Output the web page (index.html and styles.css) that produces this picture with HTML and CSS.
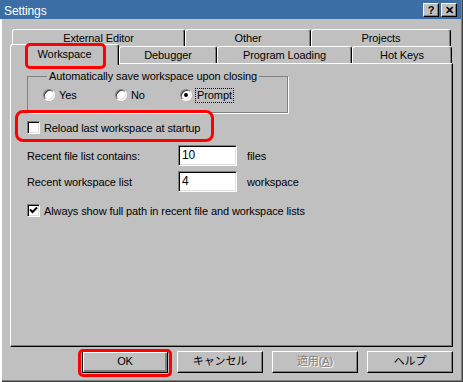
FILE: index.html
```html
<!DOCTYPE html>
<html lang="en">
<head>
    <meta charset="UTF-8">
    <title>Settings</title>
    <link rel="stylesheet" href="styles.css">
</head>
<body>
    <div class="window">
        <!-- Title bar -->
        <div class="titlebar">
            <span class="title">Settings</span>
            <div class="caption-buttons">
                <span class="cap-btn">?</span>
                <span class="cap-btn">&#x2715;</span>
            </div>
        </div>

        <!-- Tabs -->
        <div class="tabs">
            <div class="tab-row back">
                <div class="tab t-ext">External Editor</div>
                <div class="tab t-other">Other</div>
                <div class="tab t-proj">Projects</div>
            </div>
            <div class="tab-row front">
                <div class="tab t-ws selected">Workspace</div>
                <div class="tab t-dbg">Debugger</div>
                <div class="tab t-prog">Program Loading</div>
                <div class="tab t-hot">Hot Keys</div>
            </div>
        </div>

        <!-- Workspace page -->
        <div class="panel">
            <fieldset class="group">
                <legend>Automatically save workspace upon closing</legend>
                <div class="radio-row">
                    <span class="radio r-yes"><span class="radio-dot"></span>Yes</span>
                    <span class="radio r-no"><span class="radio-dot"></span>No</span>
                    <span class="radio"><span class="radio-dot on"></span><span class="focus">Prompt</span></span>
                </div>
            </fieldset>

            <div class="check-row reload">
                <span class="check-box"></span>Reload last workspace at startup
            </div>

            <div class="field-row first">
                <span class="field-label">Recent file list contains:</span>
                <span class="input">10</span>
                <span class="unit">files</span>
            </div>
            <div class="field-row">
                <span class="field-label">Recent workspace list</span>
                <span class="input">4</span>
                <span class="unit">workspace</span>
            </div>

            <div class="check-row full-path">
                <span class="check-box">
                    <svg width="9" height="9" viewBox="0 0 9 9"><path d="M1 3.5 L3.5 6 L8 1.5" fill="none" stroke="#000" stroke-width="2"/></svg>
                </span>Always show full path in recent file and workspace lists
            </div>
        </div>

        <!-- Dialog buttons -->
        <div class="buttons">
            <span class="btn default">OK</span>
            <span class="btn">キャンセル</span>
            <span class="btn disabled">適用(<u>A</u>)</span>
            <span class="btn">ヘルプ</span>
        </div>

        <!-- red annotation marks -->
        <div class="mark mark-tab"></div>
        <div class="mark mark-reload"></div>
        <div class="mark mark-ok"></div>
    </div>
</body>
</html>
```

FILE: styles.css
```css
body {
    margin: 0;
    background-color: #c0c0c0;
    font-family: "Liberation Sans", "Noto Sans CJK JP", sans-serif;
    font-size: 11px;
    letter-spacing: -0.1px;
    color: #000;
}

.window {
    position: relative;
    width: 463px;
    height: 382px;
    box-sizing: border-box;
    overflow: hidden;
    box-shadow: inset 2px 0 0 #fff, inset -1px -1px 0 #404040, inset -2px -2px 0 #808080;
}

/* Title bar */
.titlebar {
    display: flex;
    align-items: center;
    justify-content: space-between;
    height: 19px;
    margin-right: 2px;
    background-color: #3a6ea5;
    color: #fff;
}

.title {
    padding: 2px 0 0 4px;
    font-size: 12px;
}

.caption-buttons {
    display: flex;
    gap: 2px;
    padding-right: 4px;
}

.cap-btn {
    width: 16px;
    height: 14px;
    box-sizing: border-box;
    background-color: #c0c0c0;
    color: #000;
    font-weight: bold;
    font-size: 11px;
    line-height: 12px;
    text-align: center;
    border-top: 1px solid #fff;
    border-left: 1px solid #fff;
    border-right: 1px solid #000;
    border-bottom: 1px solid #000;
    box-shadow: inset -1px -1px 0 #808080;
}

/* Tabs */
.tabs {
    padding-top: 10px;
}

.tab-row {
    display: flex;
    height: 17px;
}

.tab-row.back {
    margin-left: 12px;
}

.tab-row.front {
    margin-left: 10px;
}

.tab {
    box-sizing: border-box;
    height: 17px;
    border-top: 1px solid #fff;
    border-left: 1px solid #fff;
    border-right: 1px solid #000;
    border-radius: 3px 3px 0 0;
    box-shadow: inset -1px 0 0 #808080;
    text-align: center;
    line-height: 17px;
    background-color: #c0c0c0;
}

.t-ext { width: 173px; }
.t-other { width: 126px; }
.t-proj { width: 140px; }
.t-ws { width: 109px; }
.t-dbg { width: 98px; }
.t-prog { width: 135px; }
.t-hot { width: 100px; }

.tab.selected {
    position: relative;
    z-index: 2;
    height: 21px;
    margin-top: -2px;
    line-height: 19px;
}

/* Page */
.panel {
    box-sizing: border-box;
    width: 443px;
    height: 284px;
    margin-left: 10px;
    padding: 6px 0 0 16px;
    border-top: 1px solid #fff;
    border-left: 1px solid #fff;
    border-right: 1px solid #000;
    border-bottom: 1px solid #000;
    box-shadow: inset -1px -1px 0 #808080;
}

.group {
    box-sizing: border-box;
    width: 261px;
    height: 43px;
    margin: 0;
    padding: 5px 0 0 15px;
    border: 1px solid #808080;
    box-shadow: 1px 1px 0 #fff;
}

.group legend {
    padding: 0 2px;
    margin-left: 4px;
    line-height: 13px;
}

.radio-row {
    display: flex;
    height: 14px;
    line-height: 14px;
}

.radio {
    display: flex;
    align-items: center;
    gap: 4px;
}

.r-yes { width: 72px; }
.r-no { width: 65px; }

.radio-dot {
    position: relative;
    width: 12px;
    height: 12px;
    box-sizing: border-box;
    border-radius: 50%;
    background-color: #fff;
    border-top: 1px solid #808080;
    border-left: 1px solid #808080;
    border-right: 1px solid #fff;
    border-bottom: 1px solid #fff;
    box-shadow: inset 1px 1px 0 #404040, inset -1px -1px 0 #dfdfdf;
}

.radio-dot.on::after {
    content: "";
    position: absolute;
    left: 3px;
    top: 3px;
    width: 4px;
    height: 4px;
    border-radius: 50%;
    background-color: #000;
}

.focus {
    outline: 1px dotted #000;
    padding: 0 1px;
    line-height: 13px;
}

.check-row {
    display: flex;
    align-items: center;
    gap: 4px;
    height: 13px;
}

.check-row.reload {
    margin-top: 8px;
}

.check-row.full-path {
    margin-top: 12px;
}

.check-box {
    display: flex;
    align-items: center;
    justify-content: center;
    width: 13px;
    height: 13px;
    box-sizing: border-box;
    background-color: #fff;
    border-top: 1px solid #808080;
    border-left: 1px solid #808080;
    border-right: 1px solid #fff;
    border-bottom: 1px solid #fff;
    box-shadow: inset 1px 1px 0 #000, inset -1px -1px 0 #dfdfdf;
}

.field-row {
    display: flex;
    align-items: center;
    height: 21px;
    margin-top: 5px;
}

.field-row.first {
    margin-top: 11px;
}

.field-label {
    width: 151px;
}

.input {
    box-sizing: border-box;
    width: 59px;
    height: 21px;
    padding: 2px 0 0 3px;
    background-color: #fff;
    border-top: 1px solid #808080;
    border-left: 1px solid #808080;
    border-right: 1px solid #fff;
    border-bottom: 1px solid #fff;
    box-shadow: inset 1px 1px 0 #000, inset -1px -1px 0 #dfdfdf;
    font-size: 12px;
    line-height: 15px;
}

.unit {
    margin-left: 10px;
}

/* Buttons */
.buttons {
    display: flex;
    gap: 9px;
    margin: 4px 0 0 82px;
}

.btn {
    box-sizing: border-box;
    width: 86px;
    height: 22px;
    text-align: center;
    line-height: 19px;
    border-top: 1px solid #fff;
    border-left: 1px solid #fff;
    border-right: 1px solid #000;
    border-bottom: 1px solid #000;
    box-shadow: inset -1px -1px 0 #808080;
}

.btn.default {
    border: 1px solid #000;
    box-shadow: inset 1px 1px 0 #fff, inset -2px -2px 0 #808080;
}

.btn.disabled {
    color: #808080;
    text-shadow: 1px 1px 0 #fff;
}

/* Annotation marks */
.mark {
    position: absolute;
    z-index: 5;
    box-sizing: border-box;
    border: 3px solid #ff0000;
    border-radius: 5px;
}

.mark-tab {
    left: 25px;
    top: 43px;
    width: 81px;
    height: 26px;
}

.mark-reload {
    left: 15px;
    top: 110px;
    width: 199px;
    height: 32px;
    border-radius: 8px;
}

.mark-ok {
    left: 78px;
    top: 349px;
    width: 94px;
    height: 28px;
}
```
